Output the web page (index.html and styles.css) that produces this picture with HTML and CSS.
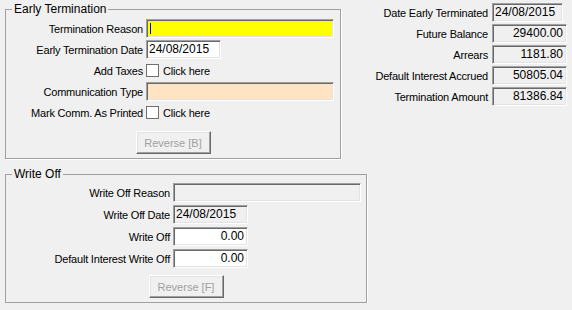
FILE: index.html
```html
<!DOCTYPE html>
<html lang="en">
<head>
  <meta charset="UTF-8">
  <title>Early Termination</title>
  <link rel="stylesheet" href="styles.css">
</head>
<body>

<div class="page">
  <div class="top-row">
    <fieldset class="group early">
      <legend>Early Termination</legend>
      <div class="form-grid">
        <label>Termination Reason</label>
        <div class="field wide yellow"><span class="caret"></span></div>

        <label>Early Termination Date</label>
        <div class="field short">24/08/2015</div>

        <label>Add Taxes</label>
        <div class="check-row"><span class="checkbox"></span> Click here</div>

        <label>Communication Type</label>
        <div class="field wide peach"></div>

        <label>Mark Comm. As Printed</label>
        <div class="check-row"><span class="checkbox"></span> Click here</div>
      </div>
      <div class="btn-row">
        <button class="win-btn" disabled>Reverse [B]</button>
      </div>
    </fieldset>

    <div class="summary">
      <label>Date Early Terminated</label>
      <div class="field readonly date">24/08/2015</div>

      <label>Future Balance</label>
      <div class="field readonly num">29400.00</div>

      <label>Arrears</label>
      <div class="field readonly num">1181.80</div>

      <label>Default Interest Accrued</label>
      <div class="field readonly num">50805.04</div>

      <label>Termination Amount</label>
      <div class="field readonly num">81386.84</div>
    </div>
  </div>

  <fieldset class="group writeoff">
    <legend>Write Off</legend>
    <div class="form-grid">
      <label>Write Off Reason</label>
      <div class="field wide readonly"></div>

      <label>Write Off Date</label>
      <div class="field short readonly">24/08/2015</div>

      <label>Write Off</label>
      <div class="field short num">0.00</div>

      <label>Default Interest Write Off</label>
      <div class="field short num">0.00</div>
    </div>
    <div class="btn-row">
      <button class="win-btn" disabled>Reverse [F]</button>
    </div>
  </fieldset>
</div>

</body>
</html>
```

FILE: styles.css
```css
body { margin: 0; background: #f0f0f0; font-family: "Liberation Sans", Arial, sans-serif; font-size: 11px; color: #000; }
.page { padding: 3px 5px 0 5px; }
.top-row { display: flex; justify-content: space-between; align-items: flex-start; }

/* group boxes */
.group {
  margin: 0; padding: 0 0 4px 0; min-width: 0;
  border: 1px solid #a0a0a0; box-shadow: 1px 1px 0 #fff;
}
.group legend { margin-left: 6px; padding: 0 2px; line-height: 13px; font-size: 12px; }
.early { width: 336px; box-sizing: border-box; }
.writeoff { width: 362px; box-sizing: border-box; margin-top: 9px; }

.form-grid {
  display: grid; grid-auto-rows: 19px; row-gap: 2px; column-gap: 3px; align-items: center;
}
.early .form-grid { grid-template-columns: 137px 1fr; margin-top: 3px; }
.writeoff .form-grid { grid-template-columns: 164px 1fr; margin-top: 2px; row-gap: 3px; }
.form-grid label, .summary label { text-align: right; white-space: nowrap; letter-spacing: -0.2px; }

/* sunken text boxes */
.field {
  box-sizing: border-box; height: 19px; line-height: 15px; padding: 1px 2px;
  font-size: 12px; background: #fff; white-space: nowrap; position: relative;
  border: 1px solid; border-color: #a0a0a0 #fff #fff #a0a0a0;
  box-shadow: inset 1px 1px 0 #696969, inset -1px -1px 0 #e3e3e3;
}
.field.wide { width: 188px; }
.field.short { width: 75px; }
.field.yellow { background: #ffff00; }
.field.peach { background: #ffe4c4; }
.field.readonly { background: #f0f0f0; }
.field.num { text-align: right; padding-right: 3px; }
.caret { position: absolute; left: 3px; top: 3px; width: 1px; height: 11px; background: #000080; }

.check-row { display: flex; align-items: center; gap: 4px; letter-spacing: -0.2px; }
.checkbox { width: 13px; height: 13px; box-sizing: border-box; background: #fff; border: 1px solid #707070; }

/* buttons */
.btn-row { display: flex; justify-content: center; margin-top: 9px; }
.writeoff .btn-row { margin-top: 7px; }
.win-btn {
  width: 75px; height: 23px; padding: 0; font: inherit; color: #a0a0a0; background: #f0f0f0;
  border: 1px solid; border-color: #fff #696969 #696969 #fff;
  box-shadow: inset -1px -1px 0 #a0a0a0, inset 1px 1px 0 #e3e3e3;
}

/* right hand summary */
.summary {
  display: grid; grid-template-columns: auto 75px; grid-auto-rows: 19px;
  row-gap: 2px; column-gap: 4px; align-items: center;
}
.summary .field { width: 75px; }
.summary .field.date { width: 71px; }
```
